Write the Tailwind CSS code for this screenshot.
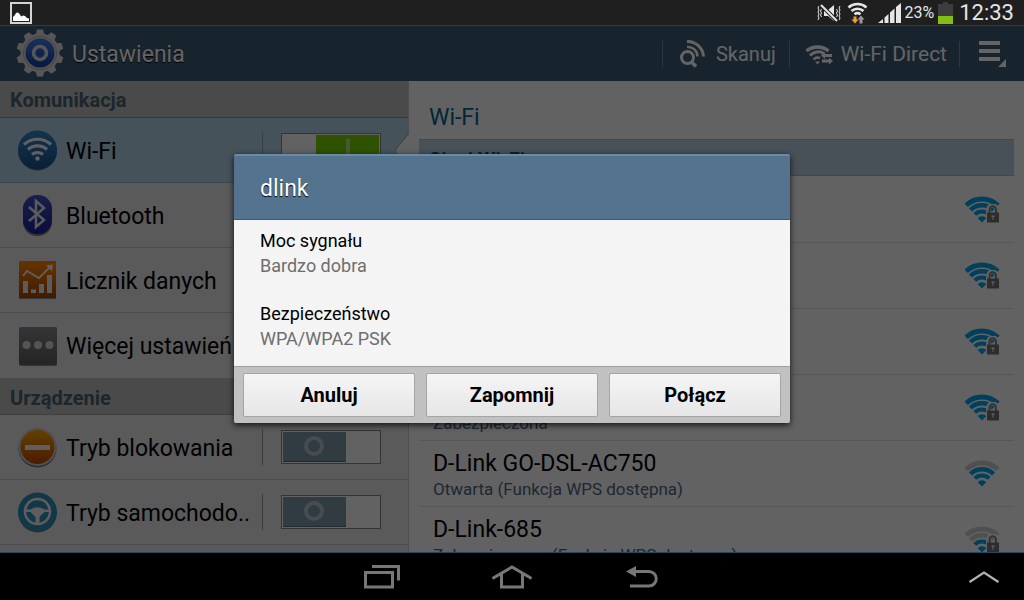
<!DOCTYPE html>
<html lang="pl">
<head>
    <meta charset="UTF-8">
    <meta name="viewport" content="width=device-width, initial-scale=1">
    <title>Ustawienia</title>
    <script src="https://cdn.jsdelivr.net/npm/@tailwindcss/browser@4"></script>
</head>
<body class="bg-black font-[Roboto,'Noto_Sans',sans-serif]">
    <!-- Shared Wi-Fi strength icons -->
    <svg class="hidden">
        <symbol id="lock" viewBox="0 0 16 20">
            <path d="M3.5 9V5.5a4 4 0 0 1 8 0V9" fill="none" stroke="#f5f5f5" stroke-width="4.5"/>
            <rect x="1" y="7.500" width="13.500" height="11.500" fill="#f5f5f5"/>
            <path d="M4.500 9V5.500a3.200 3.200 0 0 1 6.400 0V9" fill="none" stroke="#7d7d7d" stroke-width="2"/>
            <rect x="2" y="8.500" width="12" height="10" fill="#707070"/>
            <path d="M6.500 11.500h3v1.500h-1v3h-1v-3h-1z" fill="#f0f0f0"/>
        </symbol>
        <symbol id="fan-outer" viewBox="0 0 36 28"><path d="M1.100 9.300A23 23 0 0 1 32.900 9.300" fill="none" stroke="currentColor" stroke-width="5"/></symbol>
        <symbol id="fan-middle" viewBox="0 0 36 28"><path d="M5.500 14A16.600 16.600 0 0 1 28.500 14" fill="none" stroke="currentColor" stroke-width="4.500"/></symbol>
        <symbol id="fan-inner" viewBox="0 0 36 28">
            <path d="M9.800 18.400A10.500 10.500 0 0 1 24.200 18.400" fill="none" stroke="currentColor" stroke-width="4"/>
            <path d="M17 26.500L12.600 22A6.500 6.500 0 0 1 21.400 22Z" fill="currentColor"/>
        </symbol>
    </svg>

    <div class="flex flex-col h-screen overflow-hidden">
        <!-- Status bar -->
        <div class="flex items-center h-[25px] shrink-0 bg-[#1f1f1f] pl-[10px] pr-[10px] text-[#e6e6e6]">
            <svg class="w-[22px] h-[22px] mr-auto" viewBox="0 0 22 22">
                <rect x="1" y="1" width="20" height="20" fill="#1f1f1f" stroke="#d4d4d4" stroke-width="2"/>
                <path d="M3 19V15l2-2 1-2 2-.5 2 2 1 2 2-1 2 .5 2 2 2 .5V19z" fill="#fff"/>
            </svg>
            <svg class="w-[24px] h-[18px]" viewBox="0 0 24 18" fill="none" stroke="#e6e6e6">
                <path d="M2 2l-1 2 1 2-1 2 1 2-1 2 1 2-1 2M23 2l-1 2 1 2-1 2 1 2-1 2 1 2-1 2M4.500 5l-1 2 1 2-1 2 1 2M19.500 5l1 2-1 2 1 2-1 2" stroke-width="1"/>
                <path d="M7 6h4l6-5v16l-6-5H7z" fill="#e6e6e6" stroke="none"/>
                <path d="M4 1l16 16" stroke="#1f1f1f" stroke-width="4"/>
                <path d="M4 1l16 16" stroke-width="2"/>
            </svg>
            <svg class="w-[22px] h-[22px] ml-[6px]" viewBox="0 0 22 22" fill="none" stroke="#e6e6e6" stroke-width="2.600">
                <path d="M1.500 5.500a13.500 13.500 0 0 1 18 0M4.500 9a9 9 0 0 1 12 0M7.500 12.300a5 5 0 0 1 6 0"/>
                <path d="M6.500 14.500h3v3h2l-3.500 4-3.500-4h2z" fill="#f0a030" stroke="none"/>
                <path d="M12.500 21.500h3v-4h2l-3.500-4-3.500 4h2z" fill="#999" stroke="none"/>
            </svg>
            <svg class="w-[23px] h-[21px] ml-[9px]" viewBox="0 0 23 21" fill="#e6e6e6">
                <path d="M0 21l5-4v4zM6.500 15.500l4-3.500v9h-4zM12 10.500l4.500-4v14.500h-4.500zM18 5l5-4v20h-5z"/>
            </svg>
            <span class="ml-1 text-[16px]">23%</span>
            <svg class="w-[15px] h-[22px] ml-1" viewBox="0 0 15 22">
                <path d="M0 2h5V0h5v2h5v12H0z" fill="#3d3d3d"/>
                <rect y="14" width="15" height="8" fill="#84bd14"/>
            </svg>
            <span class="ml-[6px] text-[22px] leading-[24px]">12:33</span>
        </div>

        <!-- Settings screen with the dialog over it -->
        <div class="relative flex flex-col flex-1 min-h-0 border-b border-[#20485e]">
            <header class="flex items-center h-14 shrink-0 bg-[#3e5a72] border-t border-[#6e96b4] pl-4 text-[#fafafa]">
                <svg class="w-12 h-12 mb-[2px]" viewBox="-24 -24 48 48">
                    <defs>
                        <linearGradient id="gearBlue" x1="0" y1="0" x2="0" y2="1"><stop offset="0" stop-color="#3f78e8"/><stop offset="1" stop-color="#143c9c"/></linearGradient>
                    </defs>
                    <g fill="#d7d7d7">
                        <circle r="19.500"/>
                        <path id="tooth" d="M-4.500-18l1.500-5.500h6l1.500 5.500zM-4.500 18l1.500 5.500h6l1.500-5.500z"/>
                        <use href="#tooth" transform="rotate(36)"/>
                        <use href="#tooth" transform="rotate(72)"/>
                        <use href="#tooth" transform="rotate(108)"/>
                        <use href="#tooth" transform="rotate(144)"/>
                    </g>
                    <circle r="16.500" fill="none" stroke="#a5a5a5"/>
                    <circle r="14.500" fill="url(#gearBlue)"/>
                    <circle r="6.500" fill="none" stroke="#d7d7d7" stroke-width="3.500"/>
                </svg>
                <h1 class="ml-2 mr-auto pt-[3px] text-[23px] text-shadow-[0_1px_1px_black]">Ustawienia</h1>
                <button class="flex items-center h-[26px] border-l border-[#738ca0] pl-4 pr-[13px] gap-[10px] text-[20px]">
                    <svg class="w-[27px] h-[28px]" viewBox="0 0 27 28" fill="none" stroke="currentColor">
                        <circle cx="8.500" cy="17.500" r="6" stroke-width="3"/>
                        <path d="M12.500 22l4.500 4.500" stroke-width="3.500"/>
                        <path d="M8 7a9.500 9.500 0 0 1 10.500 9.500" stroke-width="2.500"/>
                        <path d="M8 1.500a16 16 0 0 1 16.500 15" stroke-width="3"/>
                    </svg>
                    Skanuj
                </button>
                <button class="flex items-center h-[26px] border-l border-[#738ca0] pl-[15px] pr-3 gap-2 text-[21px]">
                    <svg class="w-[28px] h-[22px]" viewBox="0 0 28 22" fill="none" stroke="currentColor">
                        <path d="M1.500 8a17 17 0 0 1 22 0" stroke-width="3.500"/>
                        <path d="M5 12.500a11 11 0 0 1 14-2" stroke-width="3"/>
                        <path d="M8.500 16.500a6 6 0 0 1 6.500-1.500" stroke-width="2.500"/>
                        <path d="M12.500 21.500l-2.500-3h5z" fill="currentColor" stroke="none"/>
                        <path d="M16 12.500l4-3.500v2h7v3h-7v2zM28 18l-4-3.500v2h-7v3h7v2z" fill="currentColor" stroke="none"/>
                    </svg>
                    <span class="pt-[2px]">Wi-Fi Direct</span>
                </button>
                <button class="flex items-center h-[26px] border-l border-[#738ca0] pl-[19px] pr-[18px]" aria-label="Menu">
                    <svg class="w-[27px] h-[27px]" viewBox="0 0 27 27" fill="currentColor">
                        <path d="M0 1h21v4H0zM0 9h21v4H0zM0 17h21v4H0zM27 19v8h-8z"/>
                    </svg>
                </button>
            </header>

            <div class="flex flex-1 min-h-0">
                <!-- Categories -->
                <nav class="w-[408px] shrink-0 bg-[#e1e1e1] overflow-hidden text-[23px] text-black">
                    <h2 class="flex items-center h-[37px] bg-[#b9b9b9] border-b border-[#8c8c8c] pl-[10px] pt-[2px] text-[20px] font-bold text-[#46606e]">Komunikacja</h2>
                    <div class="flex items-center h-[65px] bg-[#afcdde] border-b border-[#96b4c3] pl-4 pr-[27px]">
                        <svg class="w-[42px] h-[42px] mr-2" viewBox="0 0 42 42">
                            <defs><linearGradient id="roundBlue" x1="0" y1="0" x2="0" y2="1"><stop offset="0" stop-color="#2f82c8"/><stop offset="1" stop-color="#1a5088"/></linearGradient></defs>
                            <circle cx="21.500" cy="22" r="19.500" fill="#5a6e7a"/>
                            <circle cx="21.500" cy="21" r="19.500" fill="url(#roundBlue)"/>
                            <g fill="none" stroke="#f0f0f0" stroke-width="3.200">
                                <path d="M8 15.500a20 20 0 0 1 27 0M12 20.500a14 14 0 0 1 19 0M16 25.500a8.500 8.500 0 0 1 11 0"/>
                            </g>
                            <circle cx="21.500" cy="29.500" r="2.200" fill="#f0f0f0"/>
                        </svg>
                        <label for="wifi" class="mr-auto pt-1">Wi-Fi</label>
                        <span class="w-px h-9 mr-[18px] bg-[#829baa]"></span>
                        <input id="wifi" type="checkbox" checked class="appearance-none flex justify-end w-[100px] h-[34px] p-px bg-[#f5f5f5] border border-[#828282] before:w-[63px] before:h-[30px] before:bg-[#76cd00] before:border-b before:border-[#509600] after:absolute after:w-1 after:h-5 after:mr-[29px] after:mt-1 after:bg-[#b4dc82]">
                    </div>
                    <a href="#" class="flex items-center h-[65px] border-b border-[#bebebe] pl-4">
                        <svg class="w-[42px] h-[42px] mr-2" viewBox="0 0 42 42">
                            <defs><linearGradient id="btBlue" x1="0" y1="0" x2="0" y2="1"><stop offset="0" stop-color="#3c50be"/><stop offset="1" stop-color="#191e96"/></linearGradient></defs>
                            <rect x="7" y="2" width="29" height="40" rx="14" fill="#777"/>
                            <rect x="7" y="1" width="29" height="39" rx="14" fill="url(#btBlue)"/>
                            <path d="M13 13l15 13-8 7V7l8 7-15 13" fill="none" stroke="#e1e1e1" stroke-width="2.500"/>
                        </svg>
                        <span class="pt-1">Bluetooth</span>
                    </a>
                    <a href="#" class="flex items-center h-[65px] border-b border-[#bebebe] pl-4">
                        <svg class="w-[42px] h-[42px] mr-2" viewBox="0 0 42 42">
                            <defs><linearGradient id="dataOrange" x1="0" y1="0" x2="0" y2="1"><stop offset="0" stop-color="#ff8200"/><stop offset="1" stop-color="#a04600"/></linearGradient></defs>
                            <rect x="3" y="3" width="37" height="37" rx="1" fill="#888"/>
                            <rect x="3" y="2" width="37" height="37" rx="1" fill="url(#dataOrange)"/>
                            <path d="M7 22h5v12H7zM15 30.500h5V34h-5zM23 25h5v9h-5zM31 16h5v18h-5z" fill="#e6e6e6"/>
                            <path d="M7 17l4-5 12 7L34 8" fill="none" stroke="#ebebeb" stroke-width="1.800"/>
                            <path d="M30 6.500l7-1-1 7z" fill="#ebebeb"/>
                        </svg>
                        <span class="pt-1">Licznik danych</span>
                    </a>
                    <a href="#" class="flex items-center h-[66px] border-b border-[#bebebe] pl-4">
                        <svg class="w-[42px] h-[42px] mr-2" viewBox="0 0 42 42">
                            <defs><linearGradient id="moreGrey" x1="0" y1="0" x2="0" y2="1"><stop offset="0" stop-color="#828587"/><stop offset="1" stop-color="#5a5a5a"/></linearGradient></defs>
                            <rect x="3" y="2" width="38" height="39" rx="2" fill="#888"/>
                            <rect x="3" y="2" width="38" height="38" rx="2" fill="url(#moreGrey)"/>
                            <g fill="#d2d2d2"><circle cx="10.500" cy="20" r="4"/><circle cx="22" cy="20" r="4"/><circle cx="33.500" cy="20" r="4"/></g>
                        </svg>
                        <span class="pt-1">Więcej ustawień</span>
                    </a>
                    <h2 class="flex items-center h-9 bg-[#b9b9b9] border-b border-[#a0a0a0] pl-[10px] pt-[2px] text-[20px] font-bold text-[#46606e]">Urządzenie</h2>
                    <div class="flex items-center h-[65px] border-b border-[#bebebe] pl-4 pr-[27px]">
                        <svg class="w-[42px] h-[42px] mr-2" viewBox="0 0 42 42">
                            <defs><linearGradient id="blockOrange" x1="0" y1="0" x2="0" y2="1"><stop offset="0" stop-color="#f5a000"/><stop offset="1" stop-color="#be4600"/></linearGradient></defs>
                            <circle cx="21.500" cy="22.500" r="19" fill="#6e6e6e"/>
                            <circle cx="21.500" cy="21" r="19" fill="#c8c8c8"/>
                            <circle cx="21.500" cy="21" r="17" fill="url(#blockOrange)"/>
                            <rect x="9" y="19" width="25" height="5" fill="#ebebeb"/>
                        </svg>
                        <label for="blocking" class="mr-auto pt-1">Tryb blokowania</label>
                        <span class="w-px h-9 mr-[18px] bg-[#969696]"></span>
                        <input id="blocking" type="checkbox" class="appearance-none relative w-[100px] h-[34px] p-px bg-[#f5f5f5] border border-[#828282] before:block before:w-[63px] before:h-[30px] before:bg-[#7893a5] before:border-b before:border-[#556b78] after:absolute after:left-[22px] after:top-[5px] after:size-5 after:rounded-full after:border-4 after:border-[#b4bec8]">
                    </div>
                    <div class="flex items-center h-[65px] border-b border-[#bebebe] pl-4 pr-[27px]">
                        <svg class="w-[42px] h-[42px] mr-2" viewBox="0 0 42 42">
                            <circle cx="21.500" cy="22.500" r="19" fill="#6e6e6e"/>
                            <circle cx="21.500" cy="21" r="19.500" fill="#2d8cb4"/>
                            <circle cx="21.500" cy="20.500" r="12.500" fill="none" stroke="#ebebeb" stroke-width="2.500"/>
                            <path d="M9.500 18.500h5q7-4.500 14 0h5v2.500h-5l-5 5v7h-4v-7l-5-5h-5z" fill="#ebebeb"/>
                        </svg>
                        <label for="car" class="mr-auto pt-1">Tryb samochodo..</label>
                        <span class="w-px h-9 mr-[18px] bg-[#969696]"></span>
                        <input id="car" type="checkbox" class="appearance-none relative w-[100px] h-[34px] p-px bg-[#f5f5f5] border border-[#828282] before:block before:w-[63px] before:h-[30px] before:bg-[#7893a5] before:border-b before:border-[#556b78] after:absolute after:left-[22px] after:top-[5px] after:size-5 after:rounded-full after:border-4 after:border-[#b4bec8]">
                    </div>
                </nav>

                <!-- Wi-Fi networks -->
                <main class="relative flex-1 min-w-0 bg-[#f5f5f5] border-l border-[#bebebe] pl-[10px] pr-[10px]">
                    <svg class="absolute -left-[14px] top-[53px] w-[14px] h-[34px]" viewBox="0 0 14 34">
                        <path d="M14 0L1 15q-1 2 0 4L14 34z" fill="#f5f5f5"/>
                        <path d="M13.500 0L1 15q-1 2 0 4L13.500 34" fill="none" stroke="#a0a0a0"/>
                    </svg>
                    <div class="h-full overflow-hidden">
                        <h2 class="h-[58px] pl-[10px] pt-[23px] text-[23px] leading-[28px] text-[#00648c]">Wi-Fi</h2>
                        <h3 class="flex items-center h-[37px] mb-px bg-[#b4c8dc] border-y border-[#a0b4c3] pl-[10px] pt-1 text-[20px] font-bold text-[#374655]">Sieci Wi-Fi</h3>
                        <ul>
                            <li class="flex h-[66px] border-b border-[#d7d7d7] pl-[14px] pr-[13px] pt-[10px]">
                                <div class="mr-auto"><p class="text-[23px] leading-[26px]">dlink</p><p class="text-[17px] leading-[24px] text-[#4b6482]">Zabezpieczona</p></div>
                                <svg class="w-9 h-7 mt-[9px] text-[#00a0e6]" viewBox="0 0 36 28"><use href="#fan-outer"/><use href="#fan-middle"/><use href="#fan-inner"/><use href="#lock" x="20" y="8" width="16" height="20"/></svg>
                            </li>
                            <li class="flex h-[66px] border-b border-[#d7d7d7] pl-[14px] pr-[13px] pt-[10px]">
                                <div class="mr-auto"><p class="text-[23px] leading-[26px]">dlink</p><p class="text-[17px] leading-[24px] text-[#4b6482]">Zabezpieczona</p></div>
                                <svg class="w-9 h-7 mt-[9px] text-[#00a0e6]" viewBox="0 0 36 28"><use href="#fan-outer"/><use href="#fan-middle"/><use href="#fan-inner"/><use href="#lock" x="20" y="8" width="16" height="20"/></svg>
                            </li>
                            <li class="flex h-[66px] border-b border-[#d7d7d7] pl-[14px] pr-[13px] pt-[10px]">
                                <div class="mr-auto"><p class="text-[23px] leading-[26px]">dlink</p><p class="text-[17px] leading-[24px] text-[#4b6482]">Zabezpieczona</p></div>
                                <svg class="w-9 h-7 mt-[9px] text-[#00a0e6]" viewBox="0 0 36 28"><use href="#fan-outer"/><use href="#fan-middle"/><use href="#fan-inner"/><use href="#lock" x="20" y="8" width="16" height="20"/></svg>
                            </li>
                            <li class="flex h-[66px] border-b border-[#d7d7d7] pl-[14px] pr-[13px] pt-[10px]">
                                <div class="mr-auto"><p class="text-[23px] leading-[26px]">dlink</p><p class="text-[17px] leading-[24px] text-[#4b6482]">Zabezpieczona</p></div>
                                <svg class="w-9 h-7 mt-[9px] text-[#00a0e6]" viewBox="0 0 36 28"><use href="#fan-outer"/><use href="#fan-middle"/><use href="#fan-inner"/><use href="#lock" x="20" y="8" width="16" height="20"/></svg>
                            </li>
                            <li class="flex h-[66px] border-b border-[#d7d7d7] pl-[14px] pr-[13px] pt-[10px]">
                                <div class="mr-auto"><p class="text-[23px] leading-[26px]">D-Link GO-DSL-AC750</p><p class="text-[17px] leading-[24px] text-[#4b6482]">Otwarta (Funkcja WPS dostępna)</p></div>
                                <svg class="w-9 h-7 mt-[9px] text-[#00a0e6]" viewBox="0 0 36 28"><use href="#fan-outer" class="text-[#c8c8c8]"/><use href="#fan-middle"/><use href="#fan-inner"/></svg>
                            </li>
                            <li class="flex h-[66px] border-b border-[#d7d7d7] pl-[14px] pr-[13px] pt-[10px]">
                                <div class="mr-auto"><p class="text-[23px] leading-[26px]">D-Link-685</p><p class="text-[17px] leading-[24px] text-[#4b6482]">Zabezpieczona (Funkcja WPS dostępna)</p></div>
                                <svg class="w-9 h-7 mt-[9px] text-[#00a0e6]" viewBox="0 0 36 28"><use href="#fan-outer" class="text-[#c8c8c8]"/><use href="#fan-middle" class="text-[#c8c8c8]"/><use href="#fan-inner"/><use href="#lock" x="20" y="8" width="16" height="20"/></svg>
                            </li>
                        </ul>
                    </div>
                </main>
            </div>

            <!-- Network dialog -->
            <div class="absolute inset-0 flex items-center justify-center bg-black/60">
                <div role="dialog" aria-labelledby="dialog-title" class="w-[556px] rounded-xs shadow-[0_2px_6px_rgba(0,0,0,0.8)]">
                    <h2 id="dialog-title" class="flex items-center h-[66px] rounded-t-xs bg-[#53738e] border-t-2 border-t-[#6a8ba5] border-b border-b-[#3e5a72] px-[26px] pt-[3px] text-[23px] text-white text-shadow-[0_1px_1px_black]">dlink</h2>
                    <dl class="bg-[#f4f4f4] px-[26px] pt-2 pb-[15px] text-[18px] leading-[25px] text-black">
                        <dt>Moc sygnału</dt>
                        <dd class="mb-[23px] text-[#6e6e6e]">Bardzo dobra</dd>
                        <dt>Bezpieczeństwo</dt>
                        <dd class="text-[#6e6e6e]">WPA/WPA2 PSK</dd>
                    </dl>
                    <div class="grid grid-cols-3 gap-[11px] rounded-b-xs bg-[#c1c1c1] border-t border-[#a0a0a0] px-[9px] py-[6px] text-[20px] font-bold text-black">
                        <button class="h-[44px] rounded-xs border border-[#a5a5a5] bg-linear-to-b from-[#f5f5f5] to-[#e6e6e6]">Anuluj</button>
                        <button class="h-[44px] rounded-xs border border-[#a5a5a5] bg-linear-to-b from-[#f5f5f5] to-[#e6e6e6]">Zapomnij</button>
                        <button class="h-[44px] rounded-xs border border-[#a5a5a5] bg-linear-to-b from-[#f5f5f5] to-[#e6e6e6]">Połącz</button>
                    </div>
                </div>
            </div>
        </div>

        <!-- System navigation -->
        <div class="grid grid-cols-[1fr_auto_1fr] items-center h-[47px] shrink-0 bg-black text-[#777]">
            <div class="col-start-2 flex">
                <button class="flex justify-center w-[130px]" aria-label="Ostatnie">
                    <svg class="w-9 h-6" viewBox="0 0 36 24" fill="none" stroke="currentColor">
                        <rect x="1.500" y="7.500" width="27" height="14.500" stroke-width="3"/>
                        <path d="M8 1.500h26.500v14" stroke-width="3"/>
                    </svg>
                </button>
                <button class="flex justify-center w-[130px]" aria-label="Ekran startowy">
                    <svg class="w-10 h-6" viewBox="0 0 40 24" fill="none" stroke="currentColor">
                        <path d="M.500 13.500L20 2l19.500 11.500" stroke-width="3"/>
                        <path d="M9.500 9v13h21V9" stroke-width="3"/>
                    </svg>
                </button>
                <button class="flex justify-center w-[130px]" aria-label="Wstecz">
                    <svg class="w-8 h-6" viewBox="0 0 32 24" fill="none" stroke="currentColor">
                        <path d="M8 6.500h15a7 7 0 0 1 0 14.500H4" stroke-width="3"/>
                        <path d="M0 6.500L10 1v11z" fill="currentColor" stroke="none"/>
                    </svg>
                </button>
            </div>
            <button class="justify-self-end mr-[25px] text-[#b4b4b4]" aria-label="Rozwiń">
                <svg class="w-[30px] h-3" viewBox="0 0 30 12" fill="none" stroke="currentColor" stroke-width="2.200">
                    <path d="M.500 11L15 1.500 29.500 11"/>
                </svg>
            </button>
        </div>
    </div>
</body>
</html>
